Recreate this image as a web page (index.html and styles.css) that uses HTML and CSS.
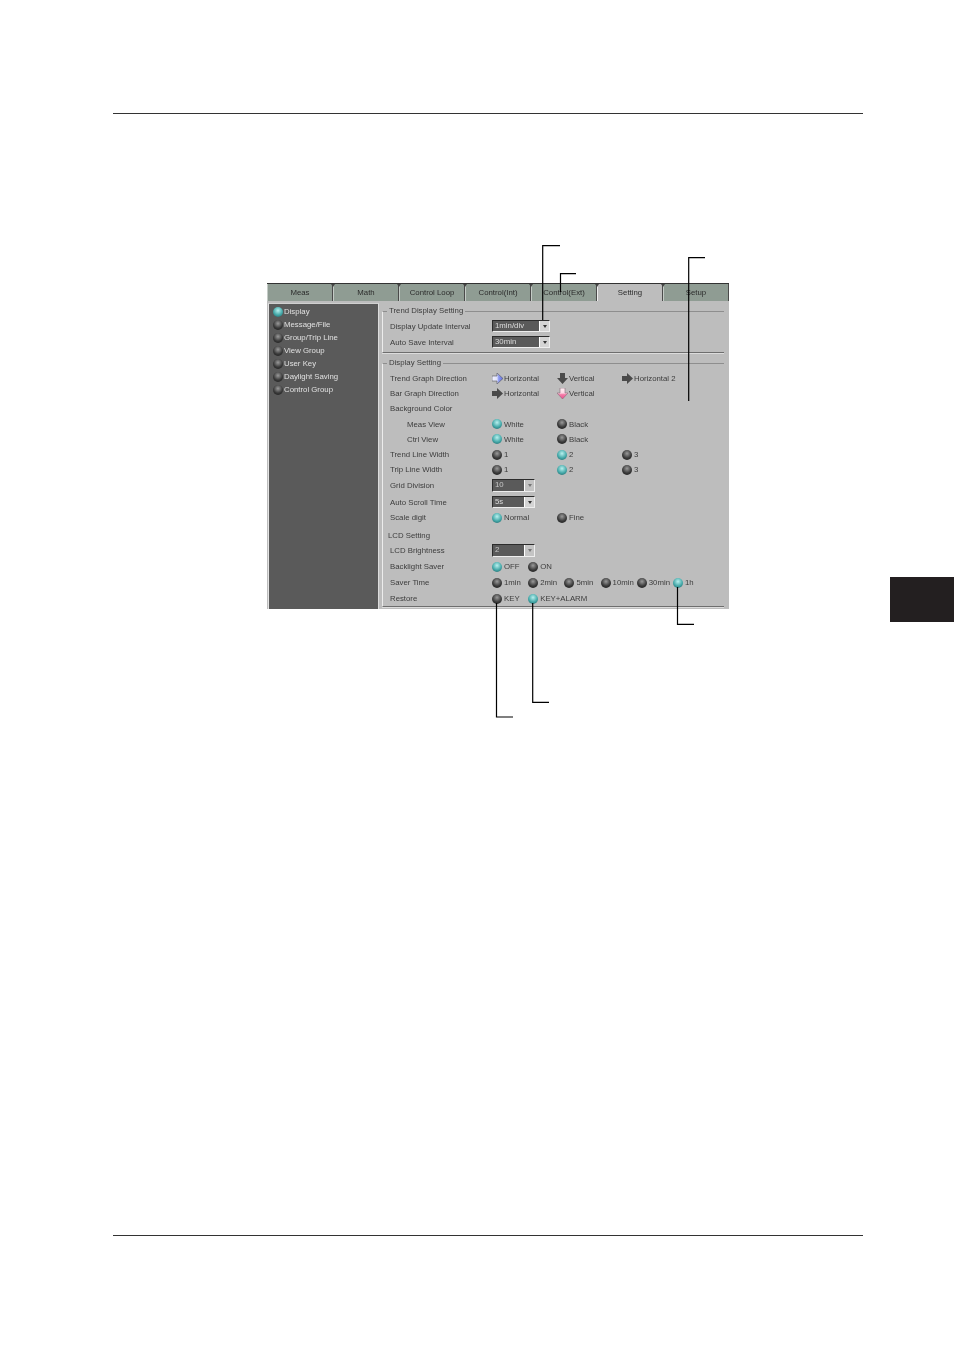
FILE: index.html
```html
<!DOCTYPE html>
<html lang="en">
<head>
    <meta charset="UTF-8">
    <title>Display Setting</title>
    <link rel="stylesheet" href="styles.css">
</head>
<body>
    <div class="page">
        <div class="top_rule"></div>
        <!-- Screenshot of the settings window -->
        <div class="window">
            <div class="tabs">
                <div class="tab">Meas</div>
                <div class="tab">Math</div>
                <div class="tab">Control Loop</div>
                <div class="tab">Control(Int)</div>
                <div class="tab">Control(Ext)</div>
                <div class="tab active">Setting</div>
                <div class="tab">Setup</div>
            </div>
            <div class="window_body">
                <div class="sidebar">
                    <div class="side_item"><span class="ball on"></span>Display</div>
                    <div class="side_item"><span class="ball"></span>Message/File</div>
                    <div class="side_item"><span class="ball"></span>Group/Trip Line</div>
                    <div class="side_item"><span class="ball"></span>View Group</div>
                    <div class="side_item"><span class="ball"></span>User Key</div>
                    <div class="side_item"><span class="ball"></span>Daylight Saving</div>
                    <div class="side_item"><span class="ball"></span>Control Group</div>
                </div>
                <div class="panel">
                    <fieldset class="group trend_group">
                        <legend>Trend Display Setting</legend>
                        <div class="row">
                            <div class="label">Display Update Interval</div>
                            <div class="select wide"><span>1min/div</span><b class="arrow"></b></div>
                        </div>
                        <div class="row">
                            <div class="label">Auto Save Interval</div>
                            <div class="select wide"><span>30min</span><b class="arrow"></b></div>
                        </div>
                    </fieldset>
                    <fieldset class="group display_group">
                        <legend>Display Setting</legend>
                        <div class="row">
                            <div class="label">Trend Graph Direction</div>
                            <div class="opt">
                                <svg class="dir" viewBox="0 0 11 11">
                                    <defs><linearGradient id="blue_fill"><stop offset="0" stop-color="#f4f4ff"/><stop offset="0.450" stop-color="#dfe2fb"/><stop offset="0.600" stop-color="#8f9cf0"/><stop offset="1" stop-color="#5c6ce0"/></linearGradient></defs>
                                    <path d="M0 3h5V0l6 5.500L5 11V8H0z" fill="url(#blue_fill)" stroke="#55555f" stroke-width="0.600"/>
                                </svg>Horizontal
                            </div>
                            <div class="opt">
                                <svg class="dir" viewBox="0 0 11 11"><path d="M3 0h5v5h3l-5.500 6L0 5h3z" fill="#4a4a4a"/></svg>Vertical
                            </div>
                            <div class="opt">
                                <svg class="dir" viewBox="0 0 11 11"><path d="M0 3h5V0l6 5.500L5 11V8H0z" fill="#4a4a4a"/></svg>Horizontal 2
                            </div>
                        </div>
                        <div class="row">
                            <div class="label">Bar Graph Direction</div>
                            <div class="opt">
                                <svg class="dir" viewBox="0 0 11 11"><path d="M0 3h5V0l6 5.500L5 11V8H0z" fill="#4a4a4a"/></svg>Horizontal
                            </div>
                            <div class="opt">
                                <svg class="dir" viewBox="0 0 11 11">
                                    <defs><linearGradient id="pink_fill" x2="0" y2="1"><stop offset="0" stop-color="#fff0f4"/><stop offset="0.450" stop-color="#fcd8e4"/><stop offset="0.600" stop-color="#f47ca8"/><stop offset="1" stop-color="#ec4c8c"/></linearGradient></defs>
                                    <path d="M3 0h5v5h3l-5.500 6L0 5h3z" fill="url(#pink_fill)" stroke="#8a6a78" stroke-width="0.600"/>
                                </svg>Vertical
                            </div>
                        </div>
                        <div class="row">
                            <div class="label">Background Color</div>
                        </div>
                        <div class="row">
                            <div class="label sub">Meas View</div>
                            <div class="opt"><span class="ball on"></span>White</div>
                            <div class="opt"><span class="ball"></span>Black</div>
                        </div>
                        <div class="row">
                            <div class="label sub">Ctrl View</div>
                            <div class="opt"><span class="ball on"></span>White</div>
                            <div class="opt"><span class="ball"></span>Black</div>
                        </div>
                        <div class="row">
                            <div class="label">Trend Line Width</div>
                            <div class="opt"><span class="ball"></span>1</div>
                            <div class="opt"><span class="ball on"></span>2</div>
                            <div class="opt"><span class="ball"></span>3</div>
                        </div>
                        <div class="row">
                            <div class="label">Trip Line Width</div>
                            <div class="opt"><span class="ball"></span>1</div>
                            <div class="opt"><span class="ball on"></span>2</div>
                            <div class="opt"><span class="ball"></span>3</div>
                        </div>
                        <div class="row tall">
                            <div class="label">Grid Division</div>
                            <div class="select dim"><span>10</span><b class="arrow"></b></div>
                        </div>
                        <div class="row tall">
                            <div class="label">Auto Scroll Time</div>
                            <div class="select"><span>5s</span><b class="arrow"></b></div>
                        </div>
                        <div class="row">
                            <div class="label">Scale digit</div>
                            <div class="opt"><span class="ball on"></span>Normal</div>
                            <div class="opt"><span class="ball"></span>Fine</div>
                        </div>
                        <div class="lcd_title">LCD Setting</div>
                        <div class="row lcd_row">
                            <div class="label">LCD Brightness</div>
                            <div class="select dim"><span>2</span><b class="arrow"></b></div>
                        </div>
                        <div class="row lcd_row">
                            <div class="label">Backlight Saver</div>
                            <div class="opt small"><span class="ball on"></span>OFF</div>
                            <div class="opt small"><span class="ball"></span>ON</div>
                        </div>
                        <div class="row lcd_row">
                            <div class="label">Saver Time</div>
                            <div class="opt small"><span class="ball"></span>1min</div>
                            <div class="opt small"><span class="ball"></span>2min</div>
                            <div class="opt small"><span class="ball"></span>5min</div>
                            <div class="opt small"><span class="ball"></span>10min</div>
                            <div class="opt small"><span class="ball"></span>30min</div>
                            <div class="opt small"><span class="ball on"></span>1h</div>
                        </div>
                        <div class="row lcd_row">
                            <div class="label">Restore</div>
                            <div class="opt small"><span class="ball"></span>KEY</div>
                            <div class="opt small"><span class="ball on"></span>KEY+ALARM</div>
                        </div>
                    </fieldset>
                </div>
            </div>
        </div>
        <div class="bottom_rule"></div>
        <div class="chapter_tab"></div>
        <!-- Callout lines drawn over the screenshot -->
        <svg class="callouts" width="954" height="1350" viewBox="0 0 954 1350">
            <path d="M560 245.700H542.700V320"/>
            <path d="M576 273.700H560.500V292"/>
            <path d="M705 257.700H688.700V401"/>
            <path d="M677.500 587V624.300H694"/>
            <path d="M532.700 603V702.300H549"/>
            <path d="M496.500 603V717H513"/>
        </svg>
    </div>
</body>
</html>
```

FILE: styles.css
```css
* {
    margin: 0;
    padding: 0;
    box-sizing: border-box;
}
body {
    background-color: #fff;
    font-family: 'Liberation Sans', Arial, sans-serif;
    color: #000;
}
.page {
    position: relative;
    width: 954px;
    height: 1350px;
    padding-top: 113px;
    overflow: hidden;
}
.top_rule, .bottom_rule {
    width: 750px;
    height: 1px;
    margin-left: 113px;
    background-color: #333;
}
.bottom_rule {
    margin-top: 626px;
}
/* Settings window */
.window {
    width: 462px;
    height: 326px;
    margin: 169px 0 0 267px;
    background-color: #bdbdbd;
    font-size: 7.8px;
    color: #3c3c3c;
    filter: blur(0.35px);
}
.tabs {
    display: flex;
    height: 18px;
    background-color: #333;
    padding-top: 1px;
}
.tab {
    position: relative;
    flex: 1;
    display: flex;
    justify-content: center;
    align-items: center;
    background-color: #8f9c93;
    border-left: 1px solid #c4cbc6;
    border-right: 1px solid #4a4a4a;
    color: #2c2c2c;
}
.tab::after {
    content: "";
    position: absolute;
    top: 0;
    right: -3px;
    border: 2px solid transparent;
    border-top: 3px solid #444;
    border-bottom: none;
    z-index: 1;
}
.tab:last-child::after {
    display: none;
}
.tab.active {
    background-color: #bdbdbd;
    border-left-color: #eee;
}
.window_body {
    display: flex;
    height: 308px;
}
.sidebar {
    width: 111px;
    margin: 2px 0 0 1px;
    padding: 1px 0 0 4px;
    background-color: #5a5a5a;
    border-top: 1px solid #d0d0d0;
    border-left: 1px solid #e4e4e4;
    border-right: 1px solid #dcdcdc;
}
.side_item {
    display: flex;
    align-items: center;
    gap: 1px;
    height: 13px;
    color: #e0e0e0;
}
.panel {
    flex: 1;
    padding: 5px 5px 0 3px;
}
.group {
    border: 1px solid #8e8e8e;
    border-right: none;
    border-left-color: #ececec;
    border-bottom-color: #6e6e6e;
    box-shadow: 0 1px 0 #dcdcdc;
    padding-left: 7px;
}
.group legend {
    margin-left: -3px;
    padding: 0 2px;
    line-height: 10px;
}
.trend_group {
    height: 47px;
    padding-top: 2px;
}
.display_group {
    height: 249px;
    margin-top: 5px;
    padding-top: 3px;
}
.row {
    display: flex;
    align-items: center;
    height: 15.200px;
}
.trend_group .row {
    height: 16px;
}
.row.tall {
    height: 16.500px;
}
.row.lcd_row {
    height: 16px;
}
.label {
    width: 102px;
    flex: none;
}
.label.sub {
    padding-left: 17px;
}
.lcd_title {
    height: 17px;
    margin-left: -2px;
    padding-top: 5px;
    line-height: 10px;
}
.opt {
    display: flex;
    align-items: center;
    gap: 2px;
    width: 65px;
    flex: none;
}
.opt.small {
    width: 36.200px;
    white-space: nowrap;
}
.ball {
    width: 10px;
    height: 10px;
    flex: none;
    border-radius: 50%;
    background: radial-gradient(circle at 50% 35%, #9a9a9a, #3a3a3a 55%, #151515);
}
.ball.on {
    background: radial-gradient(circle at 50% 35%, #b8f0ee, #44a8a8 55%, #1c5c60);
}
.dir {
    width: 11px;
    height: 11px;
    flex: none;
    margin-right: -1px;
}
/* Drop-down boxes */
.select {
    display: flex;
    width: 43px;
    height: 12.500px;
    background-color: #5a5a5a;
    border: 1px solid #2c2c2c;
    border-right-color: #eee;
    border-bottom-color: #eee;
    color: #ddd;
}
.select.wide {
    width: 58px;
}
.select span {
    flex: 1;
    padding-left: 2px;
    line-height: 10px;
}
.select .arrow {
    width: 10px;
    background-color: #d4d4d4;
    border-left: 1px solid #fff;
    display: flex;
    justify-content: center;
    align-items: center;
}
.select .arrow::after {
    content: "";
    border: 2px solid transparent;
    border-top: 3px solid #333;
    border-bottom: none;
}
.select.dim {
    color: #c8c8c8;
}
.select.dim .arrow {
    background-color: #c4c4c4;
}
.select.dim .arrow::after {
    border-top-color: #777;
}
/* Black chapter marker on the page edge */
.chapter_tab {
    position: absolute;
    top: 577px;
    right: 0;
    width: 64px;
    height: 45px;
    background-color: #231f20;
}
.callouts {
    position: absolute;
    top: 0;
    left: 0;
}
.callouts path {
    fill: none;
    stroke: #000;
    stroke-width: 1.200;
}
```
